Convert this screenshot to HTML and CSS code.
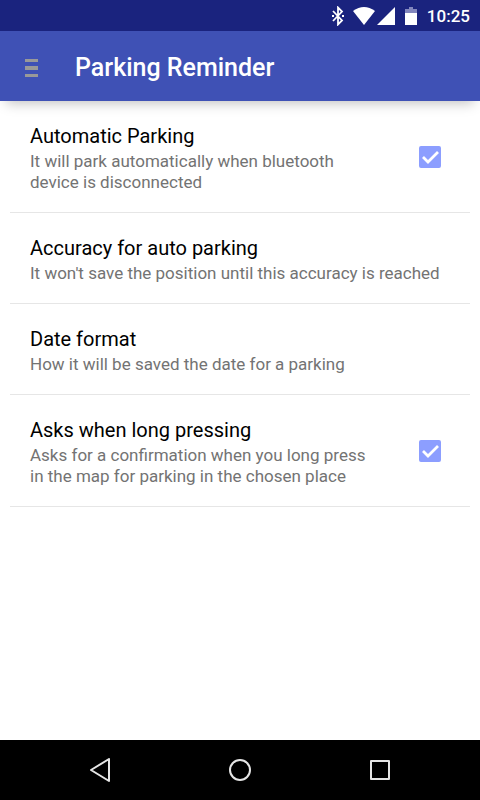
FILE: index.html
```html
<!DOCTYPE html>
<html lang="en">
<head>
    <meta charset="UTF-8">
    <meta name="viewport" content="width=device-width, initial-scale=1.0">
    <title>Parking Reminder</title>
    <link rel="stylesheet" href="styles.css">
</head>
<body>
    <div class="status-bar">
        <svg class="bluetooth" width="12" height="20" viewBox="0 0 12 20" aria-hidden="true">
            <path d="M1 5l9 9.500L6 18.500V1.500L10 5.500 1 15" fill="none" stroke="#fff" stroke-width="1.800"/>
            <path d="M0 10h2M10 10h2" stroke="#fff" stroke-width="2"/>
        </svg>
        <svg class="wifi" width="22" height="18" viewBox="0 0 22 18" aria-hidden="true">
            <path d="M0 4Q11-4 22 4L11 18z" fill="#fff"/>
        </svg>
        <svg class="signal" width="18" height="18" viewBox="0 0 18 18" aria-hidden="true">
            <path d="M18 0v18H0z" fill="#fff"/>
        </svg>
        <svg class="battery" width="12" height="18" viewBox="0 0 12 18" aria-hidden="true">
            <path d="M0 2h4V0h4v2h4v4H0z" fill="#8286bd"/>
            <path d="M0 6h12v12H0z" fill="#fff"/>
        </svg>
        <span class="clock">10:25</span>
    </div>

    <header class="app-bar">
        <button class="menu-button" type="button" aria-label="Menu">
            <svg width="13" height="18" viewBox="0 0 13 18">
                <path d="M0 0h13v3H0zM0 7h13v4H0zM0 15h13v3H0z" fill="#999"/>
            </svg>
        </button>
        <h1>Parking Reminder</h1>
    </header>

    <main class="settings">
        <label class="setting" for="auto-parking">
            <span class="setting-text">
                <span class="setting-title">Automatic Parking</span>
                <span class="setting-summary">It will park automatically when bluetooth device is disconnected</span>
            </span>
            <span class="check">
                <input type="checkbox" id="auto-parking" checked>
                <svg width="22" height="22" viewBox="0 0 22 22" aria-hidden="true">
                    <path d="M4 11l5 5L19 6" fill="none" stroke="#fff" stroke-width="2.800"/>
                </svg>
            </span>
        </label>
        <button class="setting" type="button">
            <span class="setting-text">
                <span class="setting-title">Accuracy for auto parking</span>
                <span class="setting-summary">It won't save the position until this accuracy is reached</span>
            </span>
        </button>
        <button class="setting" type="button">
            <span class="setting-text">
                <span class="setting-title">Date format</span>
                <span class="setting-summary">How it will be saved the date for a parking</span>
            </span>
        </button>
        <label class="setting" for="ask-long-press">
            <span class="setting-text">
                <span class="setting-title">Asks when long pressing</span>
                <span class="setting-summary">Asks for a confirmation when you long press in the map for parking in the chosen place</span>
            </span>
            <span class="check">
                <input type="checkbox" id="ask-long-press" checked>
                <svg width="22" height="22" viewBox="0 0 22 22" aria-hidden="true">
                    <path d="M4 11l5 5L19 6" fill="none" stroke="#fff" stroke-width="2.800"/>
                </svg>
            </span>
        </label>
    </main>

    <nav class="nav-bar">
        <button type="button" aria-label="Back">
            <svg width="24" height="24" viewBox="0 0 24 24">
                <path d="M21 1v22L3 12z" fill="none" stroke="#e6e6e6" stroke-width="2" stroke-linejoin="round"/>
            </svg>
        </button>
        <button type="button" aria-label="Home">
            <svg width="24" height="24" viewBox="0 0 24 24">
                <circle cx="12" cy="12" r="10" fill="none" stroke="#e6e6e6" stroke-width="2"/>
            </svg>
        </button>
        <button type="button" aria-label="Recent apps">
            <svg width="24" height="24" viewBox="0 0 24 24">
                <rect x="3" y="3" width="18" height="18" fill="none" stroke="#e6e6e6" stroke-width="2" stroke-linejoin="round"/>
            </svg>
        </button>
    </nav>
</body>
</html>
```

FILE: styles.css
```css
* {
    box-sizing: border-box;
}
body {
    display: flex;
    flex-direction: column;
    min-height: 100vh;
    margin: 0;
    background-color: #fff;
    color: #000;
    font-family: Roboto, sans-serif;
}
button {
    border: none;
    padding: 0;
    background: none;
    color: inherit;
    font-family: inherit;
    text-align: left;
    cursor: pointer;
}
svg {
    display: block;
}

/* Status bar */
.status-bar {
    display: flex;
    align-items: center;
    justify-content: flex-end;
    height: 31px;
    padding-top: 1px;
    padding-right: 10px;
    background-color: #1a237e;
    color: #fff;
}
.wifi {
    margin-left: 9px;
}
.signal {
    margin-left: 2px;
}
.battery {
    margin-left: 10px;
}
.clock {
    margin-left: 10px;
    font-size: 17px;
    font-weight: 500;
    line-height: 20px;
}

/* App bar */
.app-bar {
    display: flex;
    align-items: center;
    height: 70px;
    padding-top: 4px;
    padding-left: 25px;
    background-color: #3f51b5;
    color: #fff;
    box-shadow: 0 8px 12px -6px rgba(0, 0, 0, 0.25);
}
.menu-button {
    margin-right: 37px;
}
.app-bar h1 {
    margin: 0;
    font-size: 25px;
    font-weight: 500;
    line-height: 30px;
}

/* Settings list */
.settings {
    flex: 1;
    padding: 0 10px;
}
.setting {
    display: flex;
    align-items: center;
    width: 100%;
    padding: 0 20px;
    border-bottom: 1px solid #e6e6e6;
    cursor: pointer;
}
.setting-text {
    flex: 1;
    padding: 23px 0 19px;
}
.setting-title,
.setting-summary {
    display: block;
}
.setting-title {
    margin-bottom: 3px;
    font-size: 20px;
    line-height: 24px;
}
.setting-summary {
    color: #737373;
    font-size: 17px;
    line-height: 21px;
}
.check {
    display: grid;
    margin-left: 48px;
    margin-right: 9px;
}
.check input,
.check svg {
    grid-area: 1 / 1;
}
.check input {
    appearance: none;
    width: 22px;
    height: 22px;
    margin: 0;
    border: 2px solid #8c9eff;
    border-radius: 2px;
}
.check input:checked {
    background-color: #8c9eff;
}
.check svg {
    pointer-events: none;
}

/* Navigation bar */
.nav-bar {
    display: flex;
    justify-content: center;
    gap: 116px;
    padding: 18px 0;
    background-color: #000;
}
```
